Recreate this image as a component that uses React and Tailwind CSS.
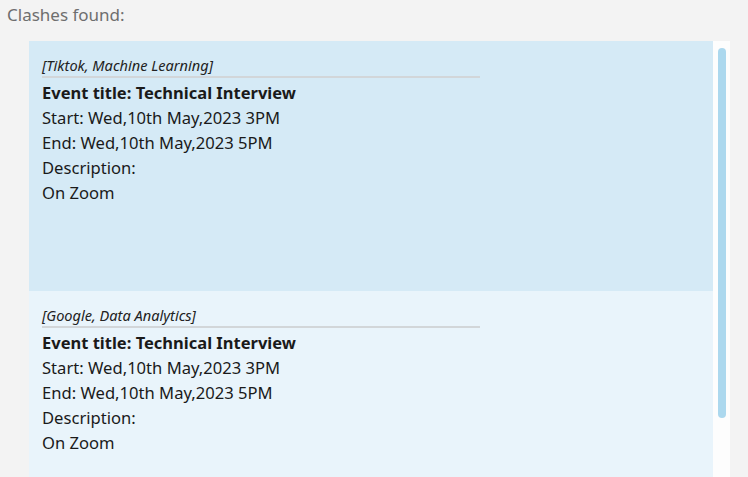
export default function App() {
  const clashes = [
    { tag: "[Tiktok, Machine Learning]", bg: "bg-[#d5eaf6]" },
    { tag: "[Google, Data Analytics]", bg: "bg-[#e9f4fb]" },
  ];

  return (
    <div
      className="w-[748px] h-[477px] bg-[#f3f3f3] overflow-hidden"
      style={{ fontFamily: '"Noto Sans", "Open Sans", sans-serif' }}
    >
      {/* Heading */}
      <div className="h-[41px] pl-[7px] pt-[2px] text-[17px] leading-[25px] text-[#6e6e6e]">
        Clashes found:
      </div>

      {/* List + scrollbar */}
      <div className="flex ml-[29px] w-[701px] h-[436px]">
        <div className="w-[684px] flex flex-col">
          {clashes.map((c, i) => (
            <div key={i} className={`${c.bg} h-[250px] shrink-0 px-[13px] pt-[14px]`}>
              <div className="w-[438px] border-b-2 border-[#d2d6d9] text-[14.6px] leading-[21px] italic text-[#222]">
                {c.tag}
              </div>
              <div className="mt-[2px] text-[16.6px] leading-[25px] text-[#1a1a1a]">
                <div className="font-bold text-[16.5px]">Event title: Technical Interview</div>
                <div>Start: Wed,10th May,2023 3PM</div>
                <div>End: Wed,10th May,2023 5PM</div>
                <div>Description:</div>
                <div>On Zoom</div>
              </div>
            </div>
          ))}
        </div>
        <div className="w-[17px] bg-[#fdfdfd] pt-[7px] flex justify-center">
          <div className="w-[8px] h-[370px] rounded-full bg-[#acd8ee]" />
        </div>
      </div>
    </div>
  );
}
